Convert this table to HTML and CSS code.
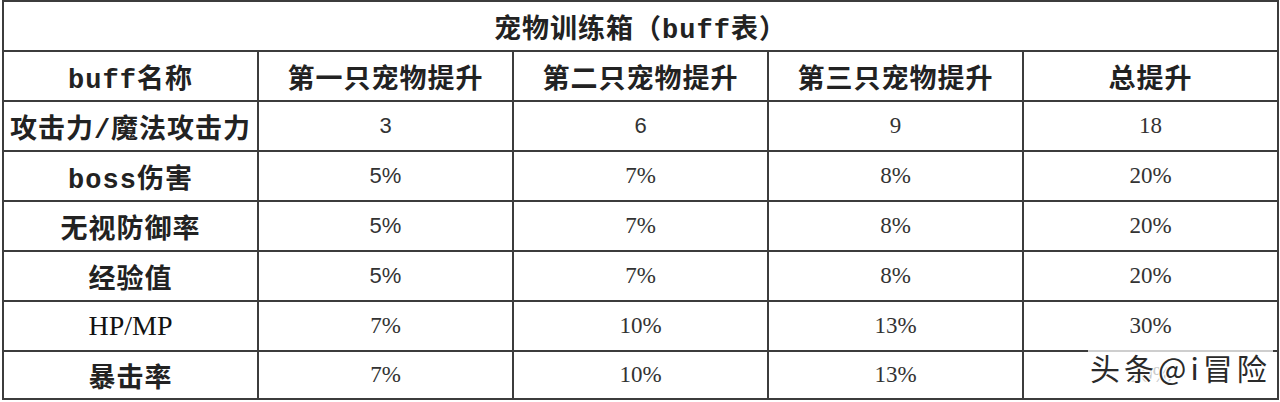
FILE: index.html
```html
<!DOCTYPE html>
<html lang="zh">
<head>
<meta charset="utf-8">
<title>宠物训练箱（buff表）</title>
<link rel="stylesheet" href="styles.css">
</head>
<body>
<div class="wrap">
<table class="buff">
  <colgroup><col><col><col><col><col></colgroup>
  <tr class="title"><th colspan="5">宠物训练箱（buff表）</th></tr>
  <tr class="head">
    <th>buff名称</th><th>第一只宠物提升</th><th>第二只宠物提升</th><th>第三只宠物提升</th><th>总提升</th>
  </tr>
  <tr><th>攻击力/魔法攻击力</th><td class="sans">3</td><td class="sans">6</td><td>9</td><td>18</td></tr>
  <tr><th>boss伤害</th><td class="sans">5%</td><td>7%</td><td>8%</td><td>20%</td></tr>
  <tr><th>无视防御率</th><td class="sans">5%</td><td>7%</td><td>8%</td><td>20%</td></tr>
  <tr><th>经验值</th><td class="sans">5%</td><td>7%</td><td>8%</td><td>20%</td></tr>
  <tr><th class="serif">HP/MP</th><td>7%</td><td>10%</td><td>13%</td><td>30%</td></tr>
  <tr class="last"><th>暴击率</th><td>7%</td><td>10%</td><td>13%</td><td>20%</td></tr>
</table>
<div class="watermark">头条@i冒险</div>
</div>
</body>
</html>
```

FILE: styles.css
```css
html, body {
  margin: 0;
  padding: 0;
  background: #ffffff;
}
.wrap {
  position: relative;
  width: 1280px;
  height: 402px;
  overflow: hidden;
}
.buff {
  margin-left: 2px;
  width: 1277px;
  table-layout: fixed;
  border-collapse: collapse;
  border: 2px solid #3c3c3c;
}
.buff th, .buff td {
  border: 2px solid #3c3c3c;
  height: 48px;
  padding: 0;
  text-align: center;
  vertical-align: middle;
}
.buff tr.last th, .buff tr.last td {
  height: 46px;
}
.buff th {
  font-family: "Liberation Mono", "Noto Sans CJK SC", monospace;
  font-weight: bold;
  font-size: 27px;
  letter-spacing: 1px;
  color: #222222;
}
.buff th.serif {
  font-family: "Liberation Serif", serif;
  font-weight: normal;
  font-size: 28px;
  letter-spacing: 0;
  color: #111111;
}
.buff td {
  font-family: "Liberation Serif", "Noto Sans CJK SC", serif;
  font-size: 23px;
  color: #333333;
}
.buff td.sans {
  font-family: "Liberation Sans Narrow", "Liberation Sans", sans-serif;
  font-stretch: condensed;
  font-size: 22px;
}
.watermark {
  position: absolute;
  left: 1088px;
  top: 345px;
  padding: 0 2px;
  font-family: "Noto Sans CJK SC", sans-serif;
  font-weight: 400;
  font-size: 30px;
  letter-spacing: 4px;
  color: #2a2a2a;
  text-shadow: 1px 1px 0 #ffffff, -1px -1px 0 #ffffff, 1px -1px 0 #ffffff, -1px 1px 0 #ffffff;
  background: rgba(255,255,255,0.75);
  line-height: 44px;
}
```
